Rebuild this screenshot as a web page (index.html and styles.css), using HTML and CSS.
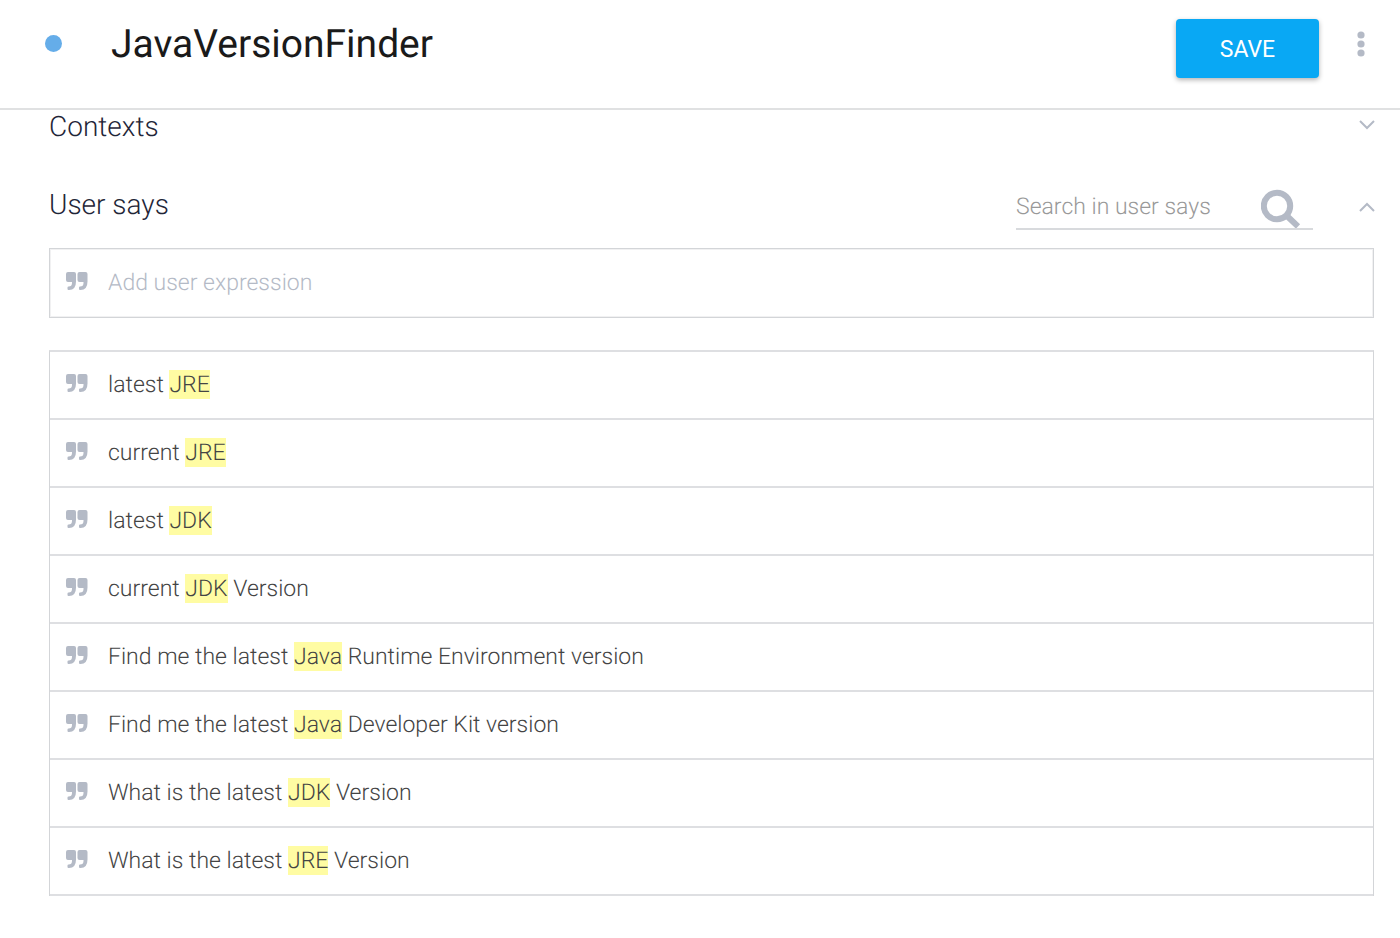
FILE: index.html
```html
<!DOCTYPE html>
<html lang="en">
<head>
  <meta charset="UTF-8" />
  <meta name="viewport" content="width=device-width, initial-scale=1.0"/>
  <title>JavaVersionFinder</title>
  <link rel="stylesheet" href="styles.css">
</head>
<body>

  <svg class="sprite" aria-hidden="true">
    <symbol id="quote" viewBox="0 0 22 18">
      <path d="M2 0h6Q10 0 10 2V9.500Q10 18 3 18H2.500q-1 0-1-1v-1.500q0-1 1-1 3.500 0 3.500-3.500v-1H2Q0 10 0 8v-6Q0 0 2 0z"/>
      <path transform="translate(11.500)" d="M2 0h6Q10 0 10 2V9.500Q10 18 3 18H2.500q-1 0-1-1v-1.500q0-1 1-1 3.500 0 3.500-3.500v-1H2Q0 10 0 8v-6Q0 0 2 0z"/>
    </symbol>
  </svg>

  <header class="header">
    <span class="status-dot"></span>
    <h1>JavaVersionFinder</h1>
    <button class="save">SAVE</button>
    <button class="icon-button menu" aria-label="More options">
      <svg width="8" height="26" viewBox="0 0 8 26">
        <circle cx="4" cy="4" r="3.600"/>
        <circle cx="4" cy="13" r="3.600"/>
        <circle cx="4" cy="22" r="3.600"/>
      </svg>
    </button>
  </header>

  <main>
    <section class="section-head contexts">
      <h2>Contexts</h2>
      <button class="icon-button toggle" aria-label="Expand contexts">
        <svg width="16" height="10" viewBox="0 0 16 10"><path class="chevron" d="M1 1l7 7 7-7"/></svg>
      </button>
    </section>

    <section class="says">
      <div class="section-head">
        <h2>User says</h2>
        <form class="search">
          <input type="text" aria-label="Search in user says" placeholder="Search in user says">
          <button type="button" class="icon-button" aria-label="Search">
            <svg width="40" height="40" viewBox="0 0 40 40">
              <circle class="lens" cx="16" cy="18" r="13.200"/>
              <path class="handle" d="M26 28l11 10.500"/>
            </svg>
          </button>
        </form>
        <button class="icon-button toggle" aria-label="Collapse user says">
          <svg width="16" height="10" viewBox="0 0 16 10"><path class="chevron" d="M1 9l7-7 7 7"/></svg>
        </button>
      </div>

      <div class="row add">
        <svg class="quote"><use href="#quote"/></svg>
        <input type="text" aria-label="Add user expression" placeholder="Add user expression">
      </div>

      <ul class="expressions">
        <li class="row"><svg class="quote"><use href="#quote"/></svg><span>latest <mark>JRE</mark></span></li>
        <li class="row"><svg class="quote"><use href="#quote"/></svg><span>current <mark>JRE</mark></span></li>
        <li class="row"><svg class="quote"><use href="#quote"/></svg><span>latest <mark>JDK</mark></span></li>
        <li class="row"><svg class="quote"><use href="#quote"/></svg><span>current <mark>JDK</mark> Version</span></li>
        <li class="row"><svg class="quote"><use href="#quote"/></svg><span>Find me the latest <mark>Java</mark> Runtime Environment version</span></li>
        <li class="row"><svg class="quote"><use href="#quote"/></svg><span>Find me the latest <mark>Java</mark> Developer Kit version</span></li>
        <li class="row"><svg class="quote"><use href="#quote"/></svg><span>What is the latest <mark>JDK</mark> Version</span></li>
        <li class="row"><svg class="quote"><use href="#quote"/></svg><span>What is the latest <mark>JRE</mark> Version</span></li>
      </ul>
    </section>
  </main>

</body>
</html>
```
FILE: styles.css
```css
* {
  box-sizing: border-box;
}

body {
  margin: 0;
  font-family: Roboto, sans-serif;
  font-size: 23px;
  font-weight: 300;
  line-height: 28px;
  text-rendering: geometricPrecision;
  color: #444;
  background: #fff;
}

h1, h2, ul {
  margin: 0;
  padding: 0;
}

.sprite {
  display: none;
}

svg {
  display: block;
  fill: #b4bac6;
}

input {
  flex: 1;
  min-width: 0;
  padding: 0;
  border: none;
  outline: none;
  background: none;
  font: inherit;
  text-rendering: inherit;
  color: inherit;
}

.icon-button {
  padding: 0;
  border: none;
  background: none;
  cursor: pointer;
}

/* header */

.header {
  display: flex;
  align-items: flex-start;
  padding: 19px 35px 30px 45px;
  border-bottom: 2px solid #e0e1e2;
}

.status-dot {
  width: 17px;
  height: 17px;
  margin-top: 16px;
  border-radius: 50%;
  background: #65ade9;
}

h1 {
  flex: 1;
  margin-left: 49px;
  font-size: 39px;
  font-weight: 400;
  line-height: 50px;
  color: #1a1a1a;
}

.save {
  width: 143px;
  height: 59px;
  padding: 2px 0 0;
  border: none;
  border-radius: 4px;
  background: #09a8f4;
  box-shadow: 0 2px 5px rgba(0, 0, 0, 0.3);
  font: inherit;
  font-weight: 400;
  color: #fff;
  cursor: pointer;
}

.menu {
  margin: 12px 0 0 38px;
}

/* sections */

main {
  padding: 0 26px 42px 49px;
}

.section-head {
  display: flex;
  align-items: center;
}

h2 {
  flex: 1;
  font-size: 28px;
  font-weight: 300;
  line-height: 34px;
  color: #1f2638;
}

.toggle {
  margin: 0 -1px 4px 0;
}

.says h2 {
  margin-bottom: 8px;
}

.contexts {
  margin-bottom: 44px;
}

.chevron {
  fill: none;
  stroke: #b4bac6;
  stroke-width: 2;
}

.search {
  display: flex;
  align-items: center;
  width: 297px;
  margin-right: 46px;
  padding-right: 12px;
  border-bottom: 2px solid #d8dadd;
}

.search input {
  padding-bottom: 2px;
}

.search input::placeholder {
  color: #999;
  opacity: 1;
}

.lens, .handle {
  fill: none;
  stroke: #b4bac6;
  stroke-width: 6;
}

/* expressions */

.row {
  display: flex;
  align-items: center;
  gap: 20px;
  height: 68px;
  padding: 0 16px;
  border-bottom: 2px solid #dedfe2;
}

.quote {
  width: 22px;
  height: 18px;
  margin-bottom: 4px;
}

.add {
  height: 70px;
  margin: 18px 0 32px;
  border: 1px solid #d3d5d8;
  box-shadow: inset 0 0 0 1px #f1f1f2;
}

.add input::placeholder {
  color: #b4bac6;
  opacity: 1;
}

.expressions {
  list-style: none;
  border: 1px solid #d3d5d8;
  border-top: 2px solid #dedfe2;
  border-bottom: none;
}

mark {
  padding: 1px 0;
  background: #fffca3;
  color: inherit;
}
```
